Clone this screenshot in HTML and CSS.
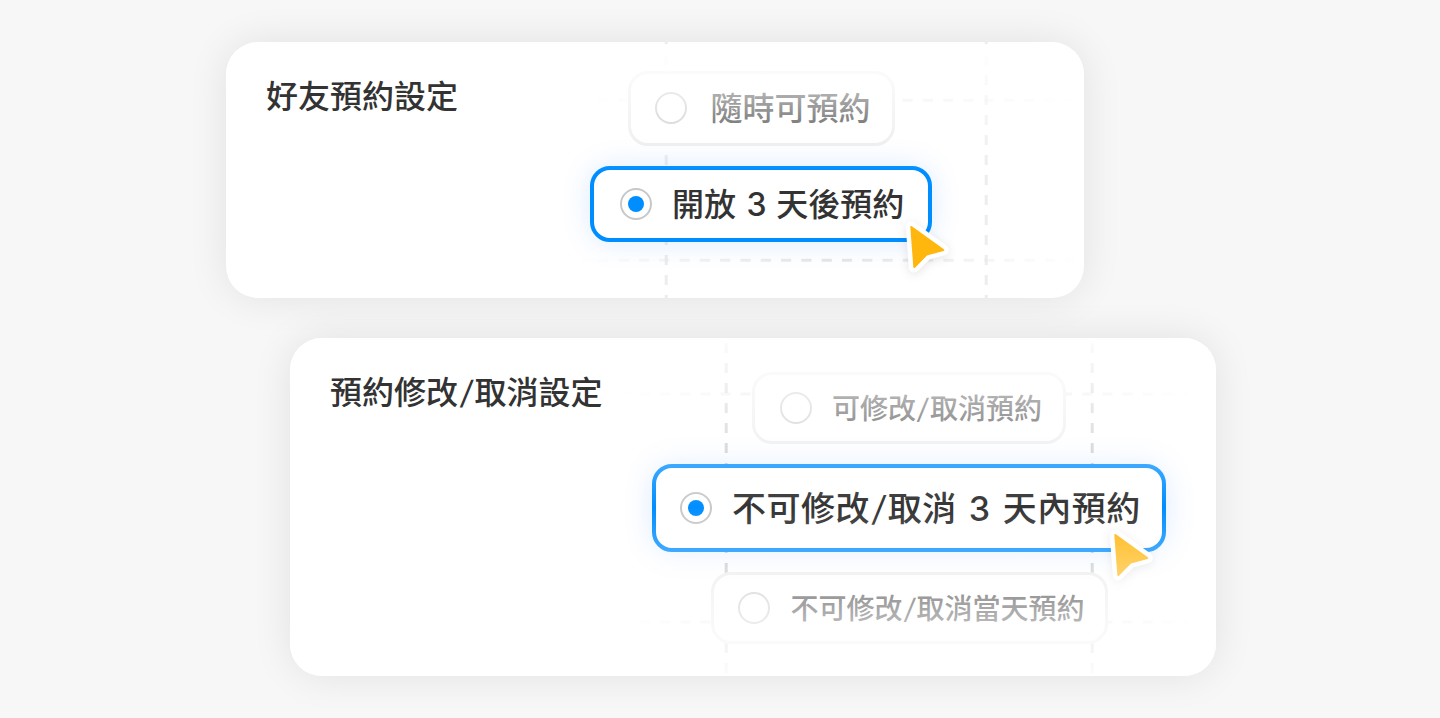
FILE: index.html
```
<!DOCTYPE html>
<html lang="zh-Hant">
  <head>
    <meta charset="UTF-8" />
    <meta name="viewport" content="width=device-width, initial-scale=1.0" />
    <title>預約設定</title>
    <link rel="stylesheet" href="styles.css">
  </head>
  <body>
    <div class="card card-friend">
      <svg class="grid" width="858" height="256" fill="none" stroke-width="3">
        <defs>
          <linearGradient id="fadeA" gradientUnits="userSpaceOnUse" x1="350" y1="0" x2="858" y2="0">
            <stop offset="0" stop-color="#e6e6e6" stop-opacity="0" />
            <stop offset="0.5" stop-color="#e6e6e6" />
            <stop offset="1" stop-color="#e6e6e6" stop-opacity="0" />
          </linearGradient>
        </defs>
        <path d="M440.2 -7V256M760.2 -7V256" stroke="#ededed" stroke-dasharray="10 10" />
        <path d="M372 58.2H850M352 218.2H850" stroke="url(#fadeA)" stroke-dasharray="10.2 10.1" />
      </svg>
      <h2 class="title">好友預約設定</h2>
      <div class="options">
        <div class="option option-anytime">
          <span class="radio"></span>
          <span>隨時可預約</span>
        </div>
        <div class="option selected">
          <span class="radio"></span>
          <span class="label">開放 <span class="num">3</span> 天後預約</span>
          <svg class="cursor" width="56" height="60" viewBox="0 0 56 60">
            <path d="M12.3 11L44.3 34L28.5 38.3Q27.5 38.5 26.8 39.3L15.3 51Z" />
            <path class="fill" d="M12.3 11L44.3 34L28.5 38.3Q27.5 38.5 26.8 39.3L15.3 51Z" />
          </svg>
        </div>
      </div>
    </div>

    <div class="card card-change">
      <svg class="grid" width="926" height="338" fill="none" stroke-width="3">
        <defs>
          <linearGradient id="fadeB" gradientUnits="userSpaceOnUse" x1="330" y1="0" x2="908" y2="0">
            <stop offset="0" stop-color="#cccccc" stop-opacity="0" />
            <stop offset="0.5" stop-color="#cccccc" />
            <stop offset="1" stop-color="#cccccc" stop-opacity="0" />
          </linearGradient>
        </defs>
        <path d="M436.2 5V338M802.2 5V338" stroke="#cccccc" stroke-dasharray="10 10" />
        <path d="M330 56H900M330 284H900" stroke="url(#fadeB)" stroke-dasharray="10 10.1" />
      </svg>
      <h2 class="title">預約修改<span class="slash">/</span>取消設定</h2>
      <div class="options">
        <div class="option small">
          <span class="radio"></span>
          <span class="label">可修改<span class="slash">/</span>取消預約</span>
        </div>
        <div class="option selected large">
          <span class="radio"></span>
          <span class="label">不可修改<span class="slash">/</span>取消 <span class="num">3</span> 天內預約</span>
          <svg class="cursor" width="56" height="60" viewBox="0 0 56 60">
            <path d="M12.3 11L44.3 34L28.5 38.3Q27.5 38.5 26.8 39.3L15.3 51Z" />
            <path class="fill" d="M12.3 11L44.3 34L28.5 38.3Q27.5 38.5 26.8 39.3L15.3 51Z" />
          </svg>
        </div>
        <div class="option small">
          <span class="radio"></span>
          <span class="label">不可修改<span class="slash">/</span>取消當天預約</span>
        </div>
      </div>
    </div>
  </body>
</html>
```
FILE: styles.css
```
* {
  box-sizing: border-box;
}
body {
  margin: 0;
  height: 718px;
  padding-top: 42px;
  overflow: hidden;
  background: #f7f7f7;
  color: #333;
  font-family: Inter, "Noto Sans CJK TC", sans-serif;
}
.card {
  position: relative;
  display: flex;
  justify-content: space-between;
  align-items: flex-start;
  background: white;
  border-radius: 32px;
  box-shadow: 0 0 40px rgba(0, 0, 0, 0.09);
}
.card-friend {
  width: 858px;
  height: 256px;
  margin-left: 226px;
  padding: 29px 152px 0 40px;
}
.card-change {
  width: 926px;
  height: 338px;
  margin: 40px 0 0 290px;
  padding: 34px 50px 0 40px;
}
/* white veil, fades the rows away from the selected one */
.card::after {
  content: "";
  position: absolute;
  inset: 2px 0 0 0;
  border-radius: 32px;
  z-index: 2;
  background: linear-gradient(white, rgba(255, 255, 255, 0) 50%);
}
.card-change::after {
  inset: 0;
  background: linear-gradient(rgba(255, 255, 255, 0.95), rgba(255, 255, 255, 0) 50%, rgba(255, 255, 255, 0.95));
}
.grid {
  position: absolute;
  top: 0;
  left: 0;
}
.title {
  position: relative;
  z-index: 3;
  margin: 2px 0 0;
  font-size: 32px;
  font-weight: 500;
  line-height: 48px;
}
.card-change .title {
  margin-top: -3px;
}
.options {
  position: relative;
  display: flex;
  flex-direction: column;
  align-items: center;
  gap: 20px;
}
.option {
  display: flex;
  align-items: center;
  gap: 24px;
  height: 75px;
  width: 267px;
  padding-left: 24px;
  border: 3px solid #ececec;
  border-radius: 20px;
  background: white;
  font-size: 32px;
  font-weight: 500;
  line-height: 48px;
  white-space: nowrap;
}
.option-anytime .radio {
  margin-bottom: 1px;
}
.small {
  width: 314px;
  height: 72px;
  padding-left: 25px;
  gap: 20px;
  font-size: 28px;
}
.small:last-child {
  width: 397px;
  padding-left: 24px;
  gap: 21px;
}
.selected {
  position: relative;
  width: 342px;
  height: 76px;
  padding-left: 26px;
  gap: 20px;
  border: 4px solid #008eff;
  box-shadow: 0 0 30px rgba(0, 110, 255, 0.14);
}
.large {
  width: 514px;
  height: 88px;
  padding-left: 24px;
  font-size: 34px;
  letter-spacing: 0.5px;
}
.label {
  padding-top: 2px;
}
.num {
  margin: 0 1px 0 2px;
}
.large .num {
  margin: 0 2.5px;
}
.slash {
  display: inline-block;
  margin: 0 2.5px;
  font-weight: 400;
  transform: skewX(-8deg);
}
.small .slash {
  margin: 0 2px;
}
.radio {
  display: flex;
  flex: none;
  width: 32px;
  height: 32px;
  border: 2px solid #c8c8c8;
  border-radius: 50%;
  background: white;
}
.selected .radio::after {
  content: "";
  width: 16px;
  height: 16px;
  margin: auto;
  border-radius: 50%;
  background: #008eff;
}
.cursor {
  position: absolute;
  right: -27px;
  bottom: -38px;
  fill: white;
  stroke: white;
  stroke-width: 11px;
  stroke-linejoin: round;
  filter: drop-shadow(0 2px 5px rgba(0, 0, 0, 0.1));
}
.large .cursor {
  right: 3px;
  bottom: -36px;
}
.cursor .fill {
  fill: #ffb60d;
  stroke: #ffb60d;
  stroke-width: 2px;
}
```
